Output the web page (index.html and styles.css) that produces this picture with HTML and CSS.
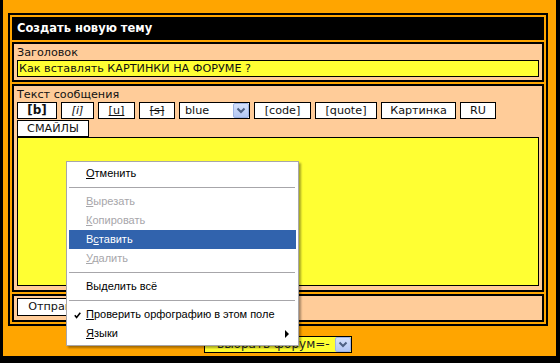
FILE: index.html
```html
<!DOCTYPE html>
<html lang="ru">
<head>
<meta charset="utf-8">
<title>Создать новую тему</title>
<link rel="stylesheet" href="styles.css">
</head>
<body>
<div class="screen">
  <div class="frame">
    <div class="box">
      <div class="title">Создать новую тему</div>
      <div class="sec">
        <div class="label">Заголовок</div>
        <div class="input">Как вставлять КАРТИНКИ НА ФОРУМЕ ?</div>
      </div>
      <div class="sec">
        <div class="label">Текст сообщения</div>
        <div class="toolbar">
          <span class="btn w-b"><b>[b]</b></span>
          <span class="btn w-i"><i>[i]</i></span>
          <span class="btn w-u"><u>[u]</u></span>
          <span class="btn w-s"><s>[s]</s></span>
          <span class="select w-sel"><span class="sel-text">blue</span><span class="arrow"><svg width="16" height="15" viewBox="0 0 16 15"><defs><linearGradient id="g1" x1="0" y1="0" x2="0" y2="1"><stop offset="0" stop-color="#d6e2fd"/><stop offset="1" stop-color="#b2c6f3"/></linearGradient></defs><rect x="0.5" y="0.5" width="15" height="14" rx="1.5" fill="url(#g1)" stroke="#9db4e6"/><polyline points="4.5,5.5 8,9 11.5,5.5" fill="none" stroke="#4d6185" stroke-width="2"/></svg></span></span>
          <span class="btn w-code">[code]</span>
          <span class="btn w-quote">[quote]</span>
          <span class="btn w-pic">Картинка</span>
          <span class="btn w-ru">RU</span>
          <span class="btn w-sm">СМАЙЛЫ</span>
        </div>
        <div class="textarea"></div>
      </div>
      <div class="sec sec-submit">
        <span class="btn w-send">Отправить</span>
      </div>
    </div>
    <div class="forum-row">
      <span class="select forum"><span class="sel-text">=выбрать форум=-</span><span class="arrow"><svg width="16" height="15" viewBox="0 0 16 15"><defs><linearGradient id="g2" x1="0" y1="0" x2="0" y2="1"><stop offset="0" stop-color="#d6e2fd"/><stop offset="1" stop-color="#b2c6f3"/></linearGradient></defs><rect x="0.5" y="0.5" width="15" height="14" rx="1.5" fill="url(#g2)" stroke="#9db4e6"/><polyline points="4.5,5.5 8,9 11.5,5.5" fill="none" stroke="#4d6185" stroke-width="2"/></svg></span></span>
    </div>
  </div>

  <div class="menu">
    <div class="item"><u>О</u>тменить</div>
    <div class="sep"></div>
    <div class="item disabled"><u>В</u>ырезать</div>
    <div class="item disabled"><u>К</u>опировать</div>
    <div class="item active">В<u>с</u>тавить</div>
    <div class="item disabled"><u>У</u>далить</div>
    <div class="sep"></div>
    <div class="item">Вы<u>д</u>елить всё</div>
    <div class="sep"></div>
    <div class="item"><svg class="check" width="7" height="7" viewBox="0 0 7 7"><polyline points="0.8,3.2 2.6,5.4 6.3,0.8" fill="none" stroke="#000" stroke-width="1.6"/></svg><u>П</u>роверить орфографию в этом поле</div>
    <div class="item"><u>Я</u>зыки<svg class="sub" width="4" height="8" viewBox="0 0 4 8"><polygon points="0,0 4,4 0,8" fill="#000"/></svg></div>
  </div>
</div>
</body>
</html>
```

FILE: styles.css
```css
html, body {
  margin: 0;
  padding: 0;
}
body {
  background: #000;
  width: 560px;
  height: 363px;
  overflow: hidden;
  font-family: "DejaVu Sans", Verdana, sans-serif;
  color: #111;
}
.screen {
  position: relative;
  height: 363px;
}
.frame {
  margin-left: 3px;
  width: 553px;
  height: 356px;
  box-sizing: border-box;
  padding: 13px 0 0 5px;
  background: #ffa500;
}
.box {
  width: 540px;
  box-sizing: border-box;
  border: 2px solid #000;
  padding: 2px;
  display: flex;
  flex-direction: column;
  gap: 2px;
}
.title {
  height: 23px;
  line-height: 23px;
  background: #000;
  color: #fff;
  font-weight: bold;
  font-size: 11.5px;
  padding-left: 5px;
}
.sec {
  background: #ffcc99;
  border: 2px solid #000;
  padding: 0 3px 3px;
}
.label {
  font-size: 11.2px;
  line-height: 17px;
  height: 16px;
}
.input {
  height: 17px;
  box-sizing: border-box;
  border: 1px solid #000;
  background: #ffff33;
  font-size: 11.2px;
  line-height: 15px;
  padding-left: 1px;
  white-space: nowrap;
}
.toolbar {
  display: flex;
  flex-wrap: wrap;
  column-gap: 4px;
  row-gap: 1px;
  width: 490px;
}
.btn {
  height: 17px;
  box-sizing: border-box;
  border: 1px solid #000;
  background: #fff;
  font-size: 11.2px;
  line-height: 15px;
  text-align: center;
  white-space: nowrap;
}
.btn b { font-weight: bold; font-size: 12px; }
.w-b { width: 40px; }
.w-i { width: 33px; }
.w-u { width: 37px; }
.w-s { width: 36px; }
.w-sel { width: 71px; }
.w-code { width: 57px; }
.w-quote { width: 62px; }
.w-pic { width: 75px; }
.w-ru { width: 36px; }
.w-sm { width: 72px; }
.w-send { display: inline-block; width: 86px; height: 18px; line-height: 16px; }

.select {
  display: flex;
  align-items: center;
  justify-content: space-between;
  height: 17px;
  box-sizing: border-box;
  border: 1px solid #000;
  background: #fff;
  font-size: 11.2px;
  line-height: 15px;
  white-space: nowrap;
}
.sel-text {
  padding-left: 5px;
}
.arrow {
  display: flex;
  width: 16px;
  height: 15px;
}
.textarea {
  height: 149px;
  box-sizing: border-box;
  border: 1px solid #000;
  background: #ffff33;
  margin-bottom: 1px;
}
.sec-submit {
  padding: 2px 3px 4px;
  line-height: 0;
}
.forum-row {
  width: 540px;
  display: flex;
  justify-content: center;
  margin-top: 10px;
}
.forum {
  width: 148px;
  background: #ffff33;
  color: #222;
  font-size: 12px;
}
.forum .sel-text {
  padding-left: 2px;
}

.menu {
  position: absolute;
  left: 66px;
  top: 161px;
  width: 233px;
  box-sizing: border-box;
  border: 1px solid #a7a6aa;
  background: #fff;
  padding: 2px;
  box-shadow: 2px 2px 2px rgba(0, 0, 0, 0.35);
  font-family: "Liberation Sans", Tahoma, sans-serif;
  font-size: 11px;
}
.item {
  position: relative;
  height: 19px;
  line-height: 19px;
  padding-left: 17px;
  color: #000;
  white-space: nowrap;
}
.item u { text-decoration: underline; }
.item.disabled { color: #a7a6aa; }
.item.active {
  background: #3163ad;
  color: #fff;
}
.sep {
  height: 9px;
  position: relative;
}
.sep::after {
  content: "";
  position: absolute;
  left: 0;
  right: 1px;
  top: 4px;
  height: 1px;
  background: #a7a6aa;
}
.check {
  position: absolute;
  left: 5px;
  top: 7px;
}
.sub {
  position: absolute;
  right: 7px;
  top: 6px;
}
```
